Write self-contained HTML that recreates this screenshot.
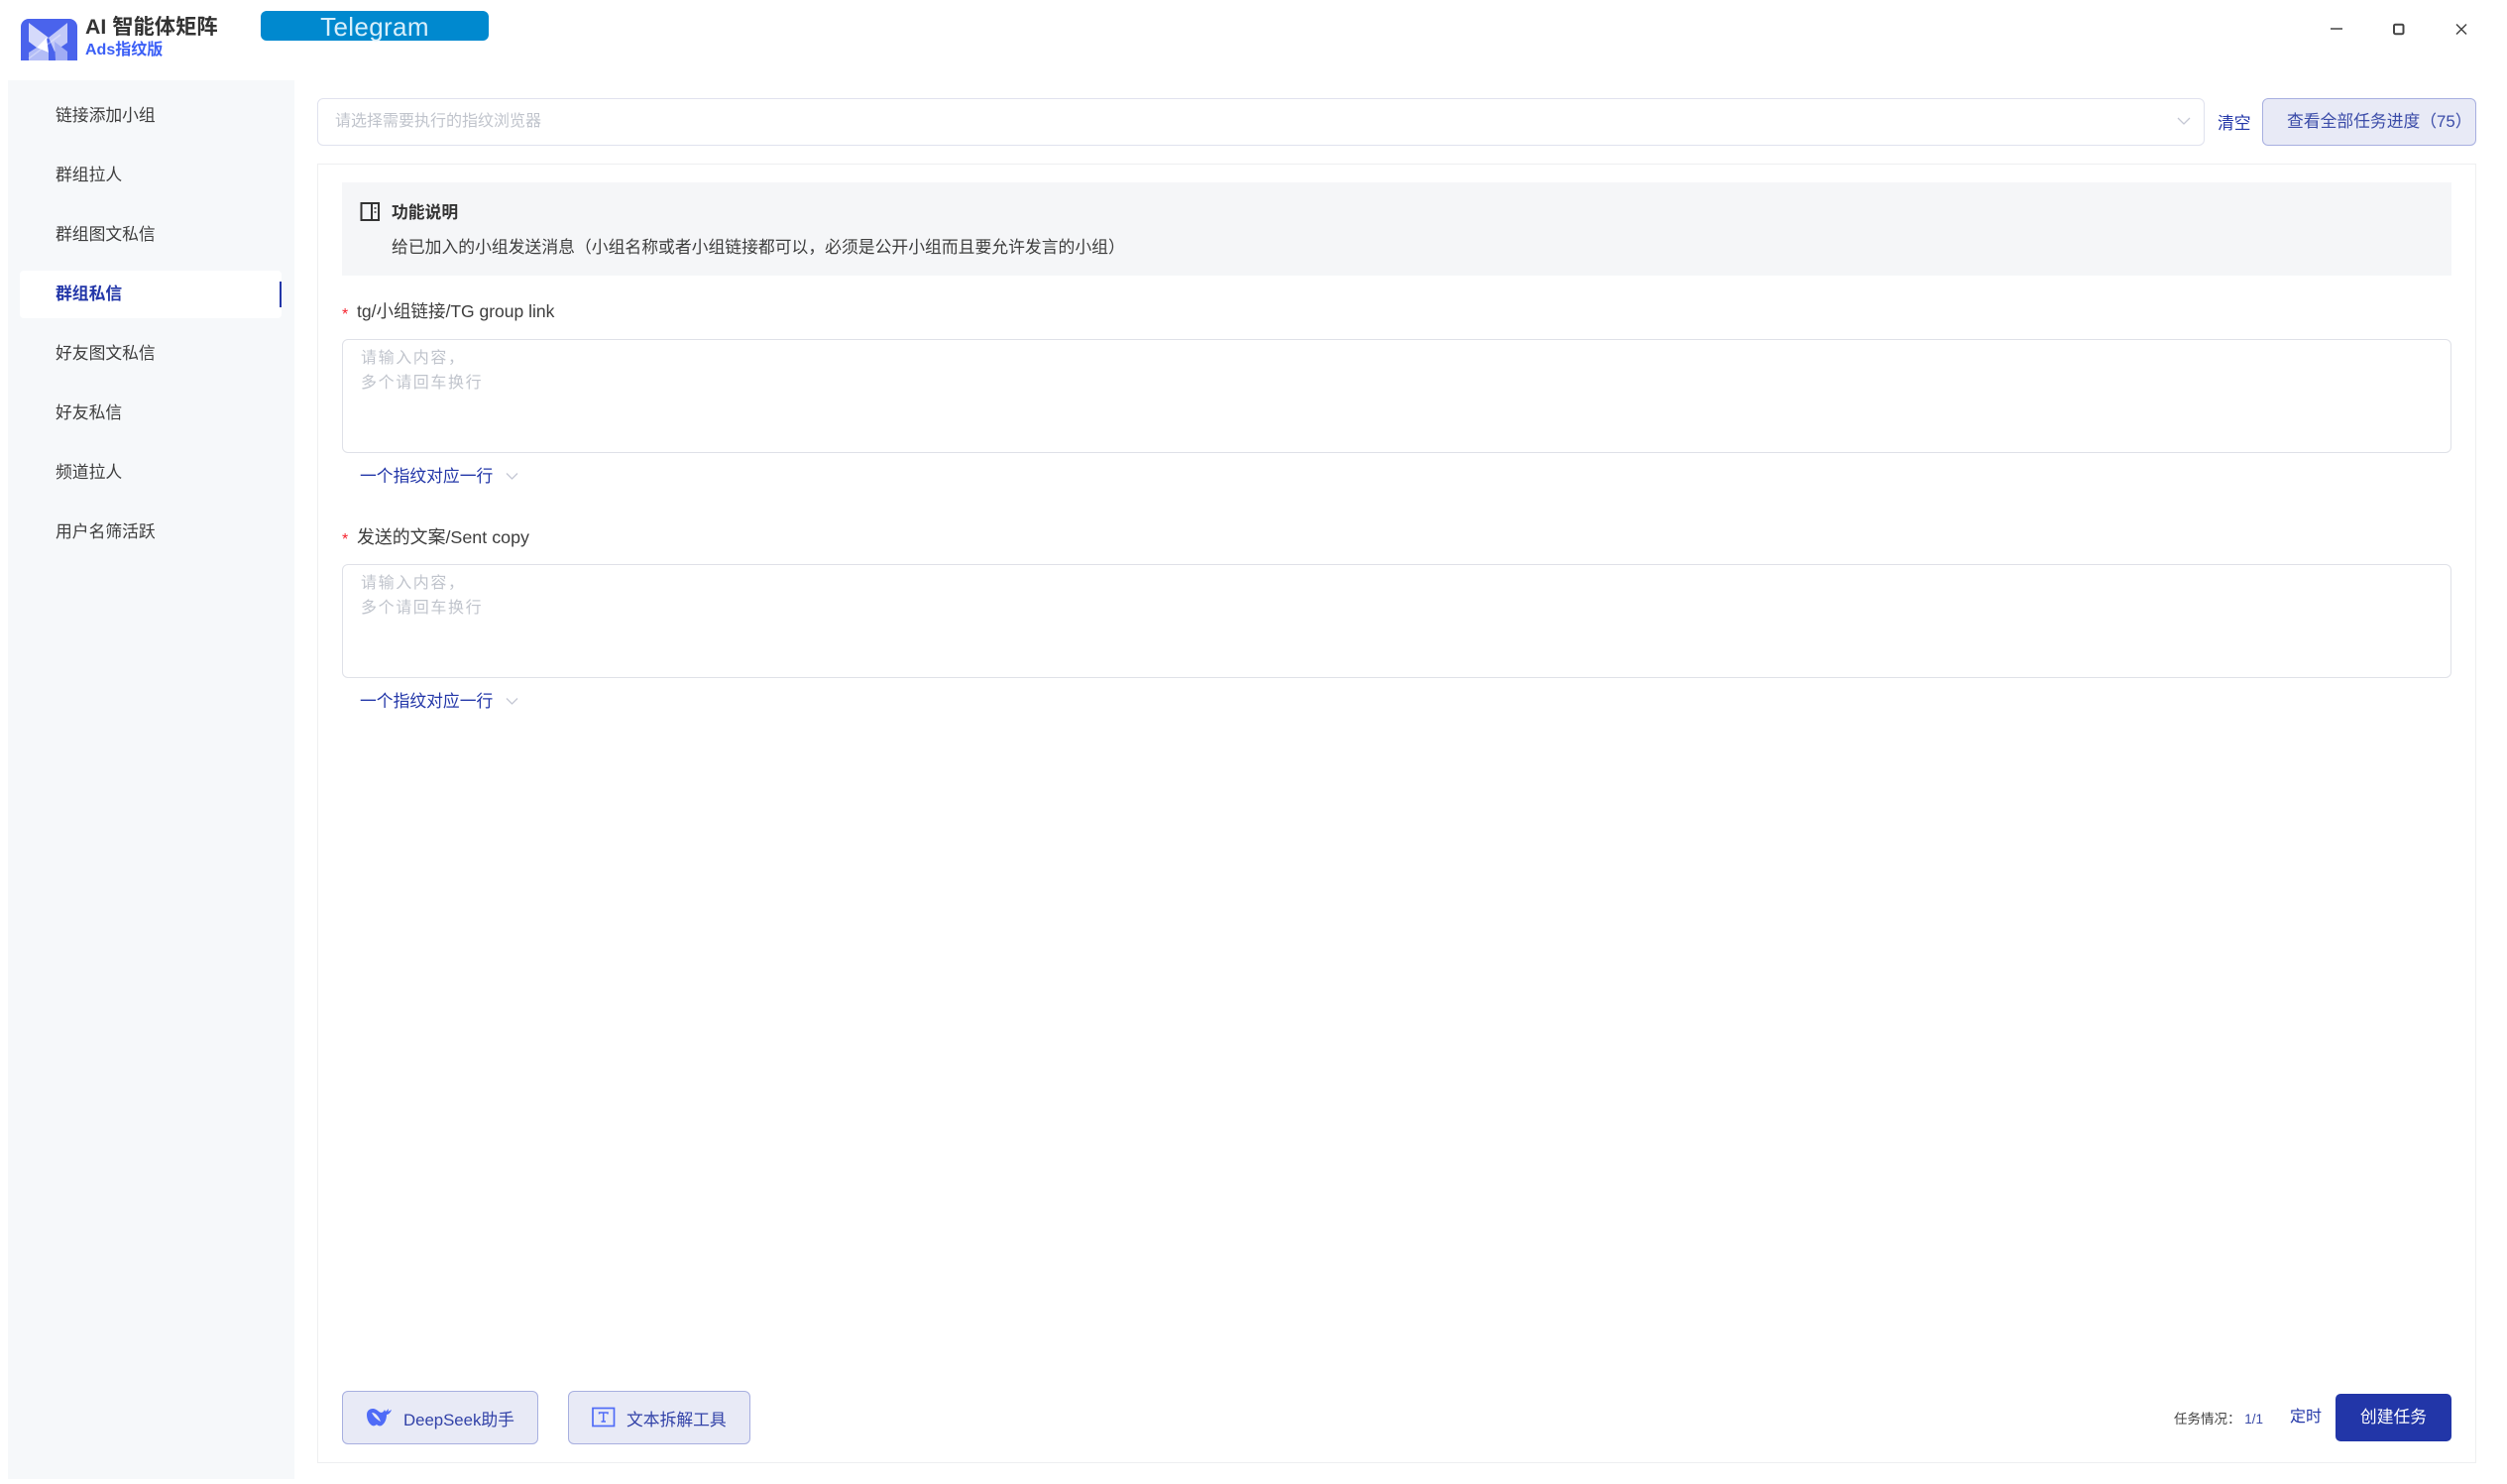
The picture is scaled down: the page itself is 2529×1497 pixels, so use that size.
<!DOCTYPE html>
<html lang="zh">
<head>
<meta charset="utf-8">
<title>AI 智能体矩阵</title>
<style>
html,body{margin:0;padding:0;background:#fff;}
body{width:2529px;height:1497px;position:relative;overflow:hidden;font-family:"Liberation Sans","Noto Sans CJK SC",sans-serif;color:#333;font-size:16.8px;}
.t{position:absolute;white-space:nowrap;line-height:24px;}
.b{position:absolute;box-sizing:border-box;}
.nav{left:56px;color:#3d3d3d;}
.ph{color:#c0c4cc;font-size:16px;letter-spacing:1.6px;left:364px;}
.lnk{color:#2236a8;}
.tool{background:#e8eaf6;border:1.5px solid #a7afe0;border-radius:6px;}
.ta{left:345px;width:2128px;height:115px;border:1.5px solid #dfe1e8;border-radius:6px;background:#fff;}
</style>
</head>
<body>
<!-- logo -->
<svg class="b" style="left:21px;top:19px" width="57" height="42" viewBox="0 0 57 42">
<path d="M0 42V8a8 8 0 0 1 8-8h41a8 8 0 0 1 8 8v34z" fill="#4a63ec"/>
<path d="M8 4L28 19 16 29 8 23z" fill="#d5dafb"/>
<path d="M47 4V24L34 33 28 19z" fill="#c3caf8"/>
<path d="M8 34l8-5 12 5v8H8z" fill="#c6cdf9" opacity=".85"/>
<path d="M34 23l13 10v9H35z" fill="#a0acf5"/>
<path d="M16 29L26 19l2 15z" fill="#fff"/>
<path d="M8 40L40 16" stroke="#fff" stroke-opacity=".35" stroke-width="1.500"/>
</svg>
<div class="t" style="left:86px;top:14px;font-size:21.3px;font-weight:700;color:#333;line-height:26px">AI 智能体矩阵</div>
<div class="t" style="left:86px;top:39.500px;font-size:16px;font-weight:700;color:#3b5ff6;line-height:22px">Ads指纹版</div>
<div class="b" style="left:263px;top:11px;width:230px;height:30px;background:#0089cf;border-radius:6px"></div>
<div class="t" style="left:263px;top:11px;width:230px;text-align:center;font-size:26px;letter-spacing:.35px;color:#d8effb;line-height:33px">Telegram</div>

<!-- window controls -->
<svg class="b" style="left:2345px;top:19px" width="150" height="20" viewBox="0 0 150 20" fill="none" stroke="#444" stroke-width="1.5">
<path d="M6 10h12"/>
<rect x="70" y="5.7" width="9.500" height="9.500" rx="1.500" stroke-width="2"/>
<path d="M133 5.500l10 10M143 5.500l-10 10"/>
</svg>

<!-- sidebar -->
<div class="b" style="left:8px;top:81px;width:289px;height:1411px;background:#f6f8fa"></div>
<div class="b" style="left:20px;top:273px;width:264px;height:48px;background:#fff;border-radius:4px"></div>
<div class="b" style="left:282px;top:284px;width:2px;height:26px;background:#2236a8"></div>
<div class="t nav" style="top:104.500px">链接添加小组</div>
<div class="t nav" style="top:164.500px">群组拉人</div>
<div class="t nav" style="top:224.500px">群组图文私信</div>
<div class="t nav" style="top:284.500px;color:#2236a8;font-weight:700">群组私信</div>
<div class="t nav" style="top:344.500px">好友图文私信</div>
<div class="t nav" style="top:404.500px">好友私信</div>
<div class="t nav" style="top:465px">频道拉人</div>
<div class="t nav" style="top:525px">用户名筛活跃</div>

<!-- top selector -->
<div class="b" style="left:320px;top:99px;width:1904px;height:48px;border:1.5px solid #e0e2ee;border-radius:6px;background:#fff"></div>
<div class="t" style="left:338px;top:111px;font-size:16px;color:#c0c4cc">请选择需要执行的指纹浏览器</div>
<svg class="b" style="left:2196px;top:117px" width="14" height="10" viewBox="0 0 14 10" fill="none" stroke="#c4c7d4" stroke-width="1.300"><path d="M1 2l6 6 6-6"/></svg>
<div class="t lnk" style="left:2237px;top:113px">清空</div>
<div class="b tool" style="left:2282px;top:99px;width:216px;height:48px"></div>
<div class="t" style="left:2307px;top:110.500px;color:#3a4ba8">查看全部任务进度（75）</div>

<!-- panel -->
<div class="b" style="left:320px;top:165px;width:2178px;height:1311px;border:1.500px solid #eeeff1;background:#fff"></div>
<div class="b" style="left:345px;top:184px;width:2128px;height:94px;background:#f5f6f8"></div>
<svg class="b" style="left:363px;top:203px" width="21" height="21" viewBox="0 0 21 21" fill="none" stroke="#333" stroke-width="2">
<rect x="1.500" y="2" width="17.500" height="17"/><path d="M12 2v17"/><path d="M14.500 7h2M14.500 11h2" stroke-width="1.600"/>
</svg>
<div class="t" style="left:395px;top:202.500px;font-weight:700;color:#333">功能说明</div>
<div class="t" style="left:395px;top:237.500px;color:#3d3d3d;font-size:16.820px">给已加入的小组发送消息（小组名称或者小组链接都可以，必须是公开小组而且要允许发言的小组）</div>

<!-- field 1 -->
<div class="t" style="left:345px;top:306px;color:#f5222d;font-size:16px">*</div>
<div class="t" style="left:360px;top:302px;color:#3d3d3d;font-size:17.500px">tg/小组链接/TG group link</div>
<div class="b ta" style="top:342px"></div>
<div class="t ph" style="top:349.500px">请输入内容，</div>
<div class="t ph" style="top:374.500px">多个请回车换行</div>
<div class="t lnk" style="left:363px;top:468.500px">一个指纹对应一行</div>
<svg class="b" style="left:510px;top:476px" width="13" height="9" viewBox="0 0 13 9" fill="none" stroke="#c4c7d4" stroke-width="1.300"><path d="M1 1.500l5.500 5.500 5.500-5.500"/></svg>

<!-- field 2 -->
<div class="t" style="left:345px;top:533px;color:#f5222d;font-size:16px">*</div>
<div class="t" style="left:360px;top:529.500px;color:#3d3d3d;font-size:17.900px">发送的文案/Sent copy</div>
<div class="b ta" style="top:569px"></div>
<div class="t ph" style="top:576.500px">请输入内容，</div>
<div class="t ph" style="top:601.500px">多个请回车换行</div>
<div class="t lnk" style="left:363px;top:695.500px">一个指纹对应一行</div>
<svg class="b" style="left:510px;top:703px" width="13" height="9" viewBox="0 0 13 9" fill="none" stroke="#c4c7d4" stroke-width="1.300"><path d="M1 1.500l5.500 5.500 5.500-5.500"/></svg>

<!-- bottom tools -->
<div class="b tool" style="left:345px;top:1403px;width:198px;height:54px"></div>
<svg class="b" style="left:370px;top:1420px" width="25" height="19" viewBox="0 0 25 19">
<path d="M0 7C0 3 3 1 6 1 9 1 11 3 13 4.500 15 5.500 17 4.500 18 2L19 4 22 1 21.500 4 25 2C24 5 22 7 20 7 20 12 18 16 15 18 13 19 11 18 10 17 8 18.500 6 19 4 17 1.500 15 0 11 0 7z" fill="#4f6bf7"/>
<path d="M5 5C7 9 10 12 14 14 12 9 9 5 5 5z" fill="#e8eaf6"/>
</svg>
<div class="t" style="left:407px;top:1420.500px;color:#3242a8">DeepSeek助手</div>
<div class="b tool" style="left:573px;top:1403px;width:184px;height:54px"></div>
<svg class="b" style="left:597px;top:1419px" width="24" height="21" viewBox="0 0 24 21" fill="none" stroke="#4f6bf7">
<rect x="1" y="1.500" width="21.500" height="18" stroke-width="1.700"/>
<path d="M7.500 7.500V6h8.500v1.500M11.700 6v9M9.500 15h4.500" stroke-width="1.500"/>
</svg>
<div class="t" style="left:632px;top:1420.500px;color:#3242a8">文本拆解工具</div>

<div class="t" style="left:2193px;top:1420px;font-size:13.500px;color:#444">任务情况： <span style="color:#3a4ba8">1/1</span></div>
<div class="t lnk" style="left:2310px;top:1418px;font-size:16px">定时</div>
<div class="b" style="left:2356px;top:1406px;width:117px;height:48px;background:#2236a8;border-radius:5px"></div>
<div class="t" style="left:2356px;top:1418px;width:117px;text-align:center;color:#fff">创建任务</div>
</body>
</html>
